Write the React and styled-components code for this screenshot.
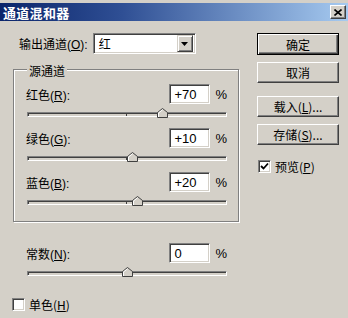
import React from 'react';
import styled, { createGlobalStyle } from 'styled-components';

const GlobalStyle = createGlobalStyle`
  body {
    margin: 0;
    background: #d4d0c8;
    font-family: "Liberation Sans", "Noto Sans CJK SC", sans-serif;
    font-size: 12px;
    color: #000;
  }
`;

const Window = styled.div`
  width: 348px;
  height: 318px;
  background: #d4d0c8;
  padding-top: 3px;
  box-sizing: border-box;
  overflow: hidden;
`;

const TitleBar = styled.div`
  height: 18px;
  display: flex;
  align-items: center;
  justify-content: space-between;
  padding: 0 2px 0 3px;
  background: linear-gradient(90deg, #0a246a 0%, #2f4f94 35%, #a6caf0 100%);
`;

const Title = styled.span`
  color: #fff;
  font-weight: bold;
  font-size: 13px;
  font-family: "Noto Sans CJK SC", sans-serif;
  letter-spacing: 0.3px;
`;

const CloseBtn = styled.div`
  width: 14px;
  height: 12px;
  display: flex;
  align-items: center;
  justify-content: center;
  background: #d4d0c8;
  border: 1px solid;
  border-color: #fff #404040 #404040 #fff;
  box-shadow: inset -1px -1px 0 #808080;
`;

const Body = styled.div`
  display: flex;
  padding: 12px 0 0 12px;
`;

const LeftCol = styled.div`
  width: 228px;
  display: flex;
  flex-direction: column;
`;

const RightCol = styled.div`
  margin-left: 17px;
  width: 82px;
  display: flex;
  flex-direction: column;
`;

const OutputRow = styled.div`
  display: flex;
  align-items: center;
  padding-left: 7px;
  height: 21px;
`;

const Label = styled.span`
  white-space: nowrap;
  flex: ${p => (p.$grow ? 1 : 'none')};
  u { text-decoration: underline; text-underline-offset: 1px; }
`;

const Select = styled.div`
  margin-left: 5px;
  width: 103px;
  height: 21px;
  box-sizing: border-box;
  display: flex;
  align-items: center;
  background: #fff;
  border: 1px solid;
  border-color: #808080 #fff #fff #808080;
  box-shadow: inset 1px 1px 0 #404040, inset -1px -1px 0 #d4d0c8;
  padding: 2px;
`;

const SelectText = styled.span`
  flex: 1;
  padding-left: 3px;
  font-family: "Noto Sans CJK SC", sans-serif;
`;

const DropBtn = styled.div`
  width: 16px;
  height: 17px;
  box-sizing: border-box;
  display: flex;
  align-items: center;
  justify-content: center;
  background: #d4d0c8;
  border: 1px solid;
  border-color: #d4d0c8 #404040 #404040 #d4d0c8;
  box-shadow: inset 1px 1px 0 #fff, inset -1px -1px 0 #808080;
`;

const Group = styled.div`
  position: relative;
  margin: 15px 0 0 1px;
  width: 226px;
  height: 153px;
  box-sizing: border-box;
  border: 1px solid #808080;
  box-shadow: inset 1px 1px 0 #fff, 1px 1px 0 #fff;
  padding: 14px 0 0 12px;
`;

const Legend = styled.span`
  position: absolute;
  top: -8px;
  left: 13px;
  padding: 0 2px;
  background: #d4d0c8;
  font-family: "Noto Sans CJK SC", sans-serif;
`;

const Block = styled.div`
  display: flex;
  flex-direction: column;
  margin: ${p => p.$mt || 0}px 0 11px 0;
  padding-left: ${p => p.$indent || 0}px;
`;

const Header = styled.div`
  display: flex;
  align-items: center;
  height: 20px;
  width: 201px;
`;

const NumInput = styled.div`
  width: 41px;
  height: 20px;
  box-sizing: border-box;
  background: #fff;
  border: 1px solid;
  border-color: #808080 #fff #fff #808080;
  box-shadow: inset 1px 1px 0 #404040, inset -1px -1px 0 #d4d0c8;
  padding: 3px 0 0 4px;
  line-height: 14px;
  font-size: 13px;
`;

const Pct = styled.span`
  margin-left: 5px;
  font-size: 13px;
`;

const Track = styled.div`
  position: relative;
  margin: 8px 0 0 1px;
  width: 200px;
  height: 5px;
  box-sizing: border-box;
  background: #d4d0c8;
  border: 1px solid;
  border-color: #808080 #fff #fff #808080;
  box-shadow: inset 1px 1px 0 #404040;
  &::after {
    content: '';
    position: absolute;
    left: 98px;
    top: 0;
    width: 1px;
    height: 3px;
    background: #404040;
  }
`;

const Thumb = styled.svg`
  position: absolute;
  top: -5px;
  width: 11px;
  height: 10px;
  z-index: 1;
`;

const CheckRow = styled.label`
  display: flex;
  align-items: center;
  gap: 4px;
  margin: ${p => p.$m || '0'};
  font-family: "Noto Sans CJK SC", sans-serif;
  u { text-decoration: underline; }
`;

const Box = styled.div`
  width: 13px;
  height: 13px;
  box-sizing: border-box;
  background: #fff;
  border: 1px solid;
  border-color: #808080 #fff #fff #808080;
  box-shadow: inset 1px 1px 0 #404040, inset -1px -1px 0 #d4d0c8;
  display: flex;
  align-items: center;
  justify-content: center;
`;

const Button = styled.div`
  width: 82px;
  height: ${p => (p.$default ? 22 : 21)}px;
  margin-bottom: ${p => p.$mb || 0}px;
  box-sizing: border-box;
  display: flex;
  align-items: center;
  justify-content: center;
  background: #d4d0c8;
  font-family: "Noto Sans CJK SC", sans-serif;
  border: 1px solid;
  border-color: ${p => (p.$default ? '#000' : '#fff #404040 #404040 #fff')};
  box-shadow: ${p =>
    p.$default
      ? 'inset 1px 1px 0 #fff, inset -1px -1px 0 #404040, inset -2px -2px 0 #808080'
      : 'inset -1px -1px 0 #808080'};
  u { text-decoration: underline; }
`;

const channels = [
  { name: '红色', key: 'R', value: 70 },
  { name: '绿色', key: 'G', value: 10 },
  { name: '蓝色', key: 'B', value: 20 },
];

const fmt = v => (v > 0 ? `+${v}` : `${v}`);

function Slider({ label, hotkey, value, shown, indent, mt }) {
  return (
    <Block $indent={indent} $mt={mt}>
      <Header>
        <Label $grow>
          {label}(<u>{hotkey}</u>):
        </Label>
        <NumInput>{shown}</NumInput>
        <Pct>%</Pct>
      </Header>
      <Track>
        <Thumb viewBox="0 0 11 10" style={{ left: 99 + value / 2 - 5 }}>
          <path d="M0.5 4.5 L5.5 0.5 L10.5 4.5 L10.5 9.5 L0.5 9.5 Z" fill="#d4d0c8" stroke="#404040" />
          <path d="M1.5 9 L1.5 5 L5.5 1.8" fill="none" stroke="#fff" />
        </Thumb>
      </Track>
    </Block>
  );
}

const Check = () => (
  <svg width="9" height="9" viewBox="0 0 9 9">
    <path d="M1 4 L3.5 6.5 L8 1.5" fill="none" stroke="#000" strokeWidth="1.8" />
  </svg>
);

export default function App() {
  return (
    <Window>
      <GlobalStyle />
      <TitleBar>
        <Title>通道混和器</Title>
        <CloseBtn>
          <svg width="8" height="7" viewBox="0 0 8 7">
            <path d="M0.5 0.5 L7.5 6.5 M7.5 0.5 L0.5 6.5" stroke="#000" strokeWidth="1.6" />
          </svg>
        </CloseBtn>
      </TitleBar>
      <Body>
        <LeftCol>
          <OutputRow>
            <Label>
              输出通道(<u>O</u>):
            </Label>
            <Select>
              <SelectText>红</SelectText>
              <DropBtn>
                <svg width="7" height="4" viewBox="0 0 7 4">
                  <path d="M0 0 L7 0 L3.5 4 Z" fill="#000" />
                </svg>
              </DropBtn>
            </Select>
          </OutputRow>
          <Group>
            <Legend>源通道</Legend>
            {channels.map(c => (
              <Slider key={c.key} label={c.name} hotkey={c.key} value={c.value} shown={fmt(c.value)} />
            ))}
          </Group>
          <Slider label="常数" hotkey="N" value={0} shown="0" indent={14} mt={21} />
          <CheckRow $m="9px 0 0 0">
            <Box />
            <span>
              单色(<u>H</u>)
            </span>
          </CheckRow>
        </LeftCol>
        <RightCol>
          <Button $default $mb={7}>确定</Button>
          <Button $mb={13}>取消</Button>
          <Button $mb={7}>
            载入(<u>L</u>)...
          </Button>
          <Button $mb={13}>
            存储(<u>S</u>)...
          </Button>
          <CheckRow $m="0 0 0 1px">
            <Box>
              <Check />
            </Box>
            <span>
              预览(<u>P</u>)
            </span>
          </CheckRow>
        </RightCol>
      </Body>
    </Window>
  );
}
